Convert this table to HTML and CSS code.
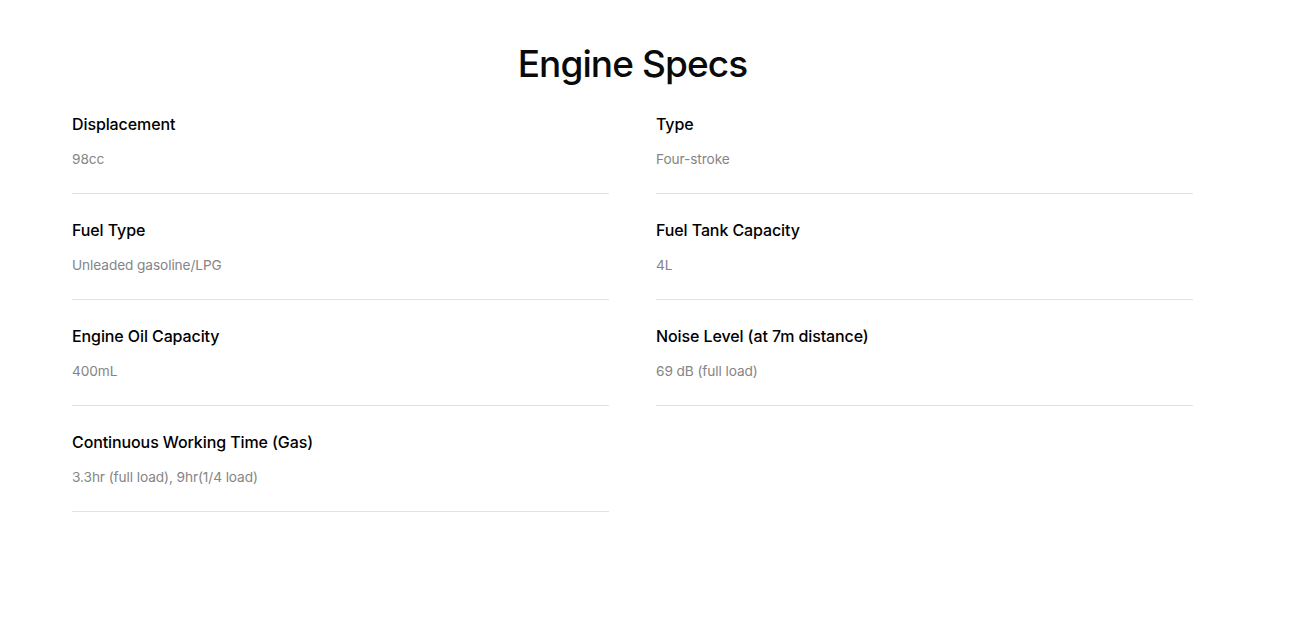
FILE: index.html
```html
<!DOCTYPE html>
<html lang="en">
<head>
<meta charset="utf-8">
<title>Engine Specs</title>
<link rel="stylesheet" href="styles.css">
</head>
<body>
<section class="specs">
  <h2 class="specs-title">Engine Specs</h2>
  <div class="specs-grid">
    <div class="spec"><div class="spec-label">Displacement</div><div class="spec-value">98cc</div></div>
    <div class="spec"><div class="spec-label">Type</div><div class="spec-value">Four-stroke</div></div>
    <div class="spec"><div class="spec-label">Fuel Type</div><div class="spec-value">Unleaded gasoline/LPG</div></div>
    <div class="spec"><div class="spec-label">Fuel Tank Capacity</div><div class="spec-value">4L</div></div>
    <div class="spec"><div class="spec-label">Engine Oil Capacity</div><div class="spec-value">400mL</div></div>
    <div class="spec"><div class="spec-label">Noise Level (at 7m distance)</div><div class="spec-value">69 dB (full load)</div></div>
    <div class="spec"><div class="spec-label">Continuous Working Time (Gas)</div><div class="spec-value">3.3hr (full load), 9hr(1/4 load)</div></div>
  </div>
</section>
</body>
</html>
```
FILE: styles.css
```css
html, body {
  margin: 0;
  padding: 0;
  background: #fff;
}
body {
  font-family: Inter, "Noto Sans", sans-serif;
  color: #000;
}
.specs {
  width: 1121px;
  margin-left: 72px;
  padding-top: 41px;
}
.specs-title {
  margin: 0 0 25px;
  text-align: center;
  font-size: 37px;
  line-height: 46px;
  font-weight: 500;
  letter-spacing: -0.9px;
  color: #0a0a0a;
}
.specs-grid {
  display: grid;
  grid-template-columns: 537px 537px;
  column-gap: 47px;
  row-gap: 24px;
}
.spec {
  border-bottom: 1px solid #e2e2e2;
  padding-bottom: 24px;
}
.spec-label {
  font-size: 16px;
  line-height: 24px;
  font-weight: 500;
  letter-spacing: -0.1px;
  margin-bottom: 13px;
}
.spec-value {
  font-size: 13.7px;
  line-height: 20px;
  color: #858585;
  letter-spacing: -0.1px;
}
```
